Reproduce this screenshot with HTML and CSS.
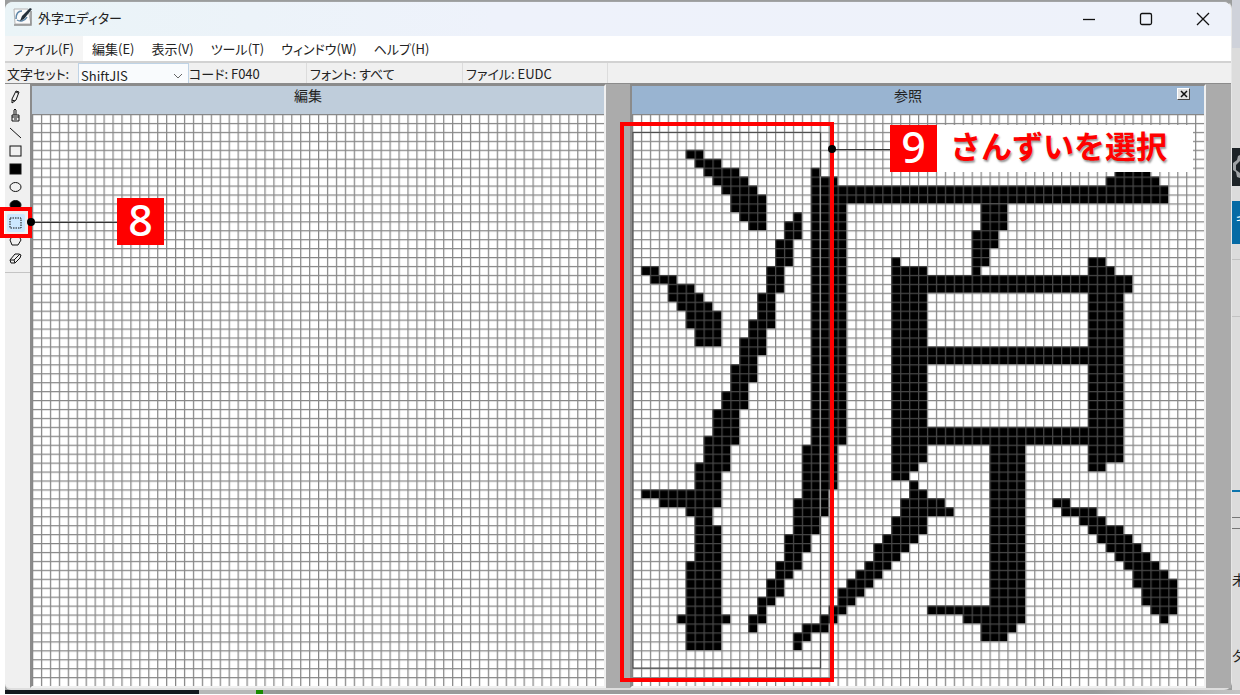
FILE: index.html
```html
<!DOCTYPE html>
<html lang="ja">
<head>
  <meta charset="UTF-8" />
  <meta name="viewport" content="width=device-width, initial-scale=1.0"/>
  <title>外字エディター</title>
  <link rel="stylesheet" href="styles.css">
</head>
<body>
  <div class="desktop">
    <div class="window">
      <header class="titlebar">
        <svg class="app-icon" viewBox="0 0 20 20">
          <path d="M1 2h14l3 15H2z" fill="#fafafa" stroke="#b5b5b5"/>
          <path d="M1 18h17V4" fill="none" stroke="#8d8d8d" stroke-width="1.5"/>
          <path d="M9 4C4 4 3 8 3 12M4 13c3 2 8 1 10-3" fill="none" stroke="#5f87a8" stroke-width="1.5"/>
          <path d="M7 14l2-5 8-8 2 1-8 10z" fill="#24303a"/>
        </svg>
        <h1>外字エディター</h1>
        <div class="window-buttons">
          <button type="button" aria-label="最小化"><svg viewBox="0 0 14 14"><path d="M1 7.500h12"/></svg></button>
          <button type="button" aria-label="最大化"><svg viewBox="0 0 14 14"><rect x="1.500" y="1.500" width="11" height="11" rx="1.500"/></svg></button>
          <button type="button" aria-label="閉じる"><svg viewBox="0 0 14 14"><path d="M1 1l12 12M13 1L1 13"/></svg></button>
        </div>
      </header>

      <nav class="menubar">
        <button type="button" class="hover">ファイル(F)</button>
        <button type="button">編集(E)</button>
        <button type="button">表示(V)</button>
        <button type="button">ツール(T)</button>
        <button type="button">ウィンドウ(W)</button>
        <button type="button">ヘルプ(H)</button>
      </nav>

      <div class="infobar">
        <label for="charset">文字セット:</label>
        <div class="select-wrap">
          <select id="charset"><option>ShiftJIS</option></select>
          <svg viewBox="0 0 10 6"><path d="M1 1l4 4 4-4"/></svg>
        </div>
        <span class="cell code">コード: F040</span>
        <span class="cell font">フォント: すべて</span>
        <span class="cell file">ファイル: EUDC</span>
      </div>

      <div class="workspace">
        <div class="toolbar">
          <button type="button" aria-label="鉛筆"><svg viewBox="0 0 16 16"><path d="M5 14v-4l4-8 3 1-3 8zM5 11l3 1M9 3l2 1"/></svg></button>
          <button type="button" aria-label="ブラシ"><svg viewBox="0 0 16 16"><path d="M7 8V3l1-1 1 1v5M5 8h7v6H5zM5 10h7M7 12h3"/></svg></button>
          <button type="button" aria-label="直線"><svg viewBox="0 0 16 16"><path d="M3 3l11 10"/></svg></button>
          <button type="button" aria-label="四角形"><svg viewBox="0 0 16 16"><rect x="3" y="3" width="11" height="10"/></svg></button>
          <button type="button" aria-label="四角形 (塗りつぶし)"><svg viewBox="0 0 16 16"><rect class="solid" x="3" y="3" width="11" height="10"/></svg></button>
          <button type="button" aria-label="だ円"><svg viewBox="0 0 16 16"><ellipse cx="8.500" cy="8" rx="5.500" ry="4.500"/></svg></button>
          <button type="button" aria-label="だ円 (塗りつぶし)"><svg viewBox="0 0 16 16"><ellipse class="solid" cx="8.500" cy="8" rx="5.500" ry="4.500"/></svg></button>
          <div class="tool-current">
            <button type="button" class="active" aria-label="四角形選択"><svg viewBox="0 0 16 16"><rect x="3" y="3" width="11" height="10" stroke-dasharray="1.500 1"/></svg></button>
            <div class="callout-frame"></div>
            <div class="callout-line"></div>
            <div class="callout-dot"></div>
            <div class="badge">8</div>
          </div>
          <button type="button" aria-label="自由選択"><svg viewBox="0 0 16 16"><path d="M5 3l-2 4 2 5h6l3-5-2-4z"/></svg></button>
          <button type="button" aria-label="消しゴム"><svg viewBox="0 0 16 16"><path d="M3 9l5-6h4l2 1-1 3-5 5H4zM3 9h4l1 3M7 9l6-6"/></svg></button>
        </div>

        <main class="panels">
          <section class="panel">
            <div class="panel-title"><h2>編集</h2></div>
            <svg class="bitmap" viewBox="0 0 64 64">
              <defs>
                <pattern id="grid" width="1" height="1" patternUnits="userSpaceOnUse">
                  <path class="grid-line" d="M0 0.070H1M0.070 0V1"/>
                </pattern>
              </defs>
              <rect width="64" height="64" fill="url(#grid)"/>
            </svg>
          </section>

          <section class="panel reference">
            <div class="panel-title">
              <h2>参照</h2>
              <button type="button" class="panel-close" aria-label="閉じる"><svg viewBox="0 0 8 8"><path d="M1 1l6 6M7 1L1 7"/></svg></button>
            </div>
            <div class="canvas">
              <svg class="bitmap" viewBox="0 0 64 64">
                <rect class="selection" x="0.100" y="2.060" width="21" height="59.940"/>
                <g class="glyph">
                  <!-- さんずい -->
                  <path d="M6 4H8V5H10V6H12V7H13V8H14V9H15V13H13V12H12V11H11V9H10V8H9V7H8V6H7V5H6Z"/>
                  <path d="M1 17H3V18H5V19H7V20H8V21H9V22H10V26H7V24H6V22H5V21H4V19H2V18H1Z"/>
                  <path d="M18 11H19V14H18V17H17V20H16V24H15V27H14V30H13V33H12V37H11V40H10V44H9V46H10V56H11V57H10V60H6V57H5V56H6V50H7V45H6V44H3V43H1V42H7V39H8V36H9V33H10V31H11V28H12V25H13V23H14V20H15V17H16V14H17V12H18Z"/>
                  <!-- 原 -->
                  <path d="M20 6H21V7H23V8H53V7H54V6H58V7H59V8H60V10H24V37H23V42H22V45H21V47H20V49H19V51H18V52H17V54H16V55H15V57H14V58H13V56H14V54H15V52H16V50H17V47H18V43H19V37H20Z"/>
                  <path d="M39 10H42V13H41V15H40V17H39V18H38V13H39Z"/>
                  <path d="M29 16H30V17H33V18H51V16H53V17H54V18H56V20H55V39H53V40H51V37H44V57H43V58H42V59H39V57H37V56H33V55H40V37H33V39H32V40H31V41H29ZM33 20V26H51V20ZM33 28V35H51V28Z"/>
                  <path d="M31 41H32V42H33V43H35V44H36V45H33V47H32V48H31V49H30V50H29V51H28V52H27V53H26V54H25V55H24V56H23V57H22V58H20V59H19V60H18V58H19V57H21V56H22V55H23V53H24V52H25V51H26V50H27V48H28V47H29V45H30V43H31Z"/>
                  <path d="M47 43H49V44H52V45H53V46H55V47H56V48H57V49H58V50H59V51H60V52H61V56H60V57H59V56H58V55H57V53H56V51H55V50H54V49H53V48H52V47H51V46H50V45H48V44H47Z"/>
                </g>
                <rect width="64" height="64" fill="url(#grid)"/>
                <path class="selection-inverse" d="M21.060 7V45"/>
              </svg>
              <div class="callout-frame"></div>
              <div class="callout-line"></div>
              <div class="callout-dot"></div>
              <div class="callout-text"><span class="badge">9</span><strong>さんずいを選択</strong></div>
            </div>
          </section>
        </main>
      </div>
    </div>

    <!-- edge of the browser behind the window -->
    <div class="behind-right">
      <div class="tab"></div>
      <div class="gear"><svg viewBox="0 0 8 38"><path d="M8 7L6 8 5 12 1 15v7l3 2 1 5 3 1" fill="#a0a3a6"/><path d="M8 13L4 17v5l4 3" fill="#1d2327"/></svg></div>
      <div class="blue">キ</div>
      <div class="rule first"></div>
      <div class="rule second"></div>
      <div class="rule accent"></div>
      <div class="rule dark"></div>
      <div class="rule dark"></div>
      <div class="text">未</div>
      <div class="text">タ</div>
    </div>
    <div class="behind-bottom"><div class="dark"></div><div class="light"></div><div class="green"></div><div class="rest"></div></div>
  </div>
</body>
</html>
```

FILE: styles.css
```css
* {
  box-sizing: border-box;
}
body {
  margin: 0;
  background-color: #fff;
  color: #222;
  font-family: "Noto Sans CJK JP", sans-serif;
  font-size: 13px;
  font-feature-settings: "palt";
}
button {
  padding: 0;
  border: none;
  background: none;
  color: inherit;
  font: inherit;
  font-feature-settings: inherit;
}
h1, h2 {
  margin: 0;
  font-weight: normal;
}
.desktop {
  display: grid;
  grid-template-columns: 1fr 8px;
  padding-left: 5px;
  background: linear-gradient(90deg, #fff 5px, #9b9d9d 5px);
}
.window {
  margin-top: 1px;
  border: 1px solid #a2a4a5;
  border-width: 1px 1px 2px 0;
  border-color: #a2a4a5 #e6e6e6 #dedede;
  border-radius: 8px 8px 8px 6px;
  background-color: #f0f0f0;
}

/* title bar */
.titlebar {
  display: flex;
  align-items: center;
  height: 34px;
  padding-left: 8px;
  border-radius: 8px 8px 0 0;
  background: linear-gradient(90deg, #eaf4f7, #eef2fb 40%, #eef2fa);
}
.titlebar h1 {
  flex: 1;
  font-size: 13px;
  line-height: 32px;
  align-self: flex-start;
}
.app-icon {
  width: 20px;
  height: 20px;
  margin: 0 5px 4px 0;
}
.window-buttons {
  display: flex;
  align-self: flex-start;
}
.window-buttons button {
  width: 57px;
  height: 31px;
}
.window-buttons svg {
  width: 14px;
  height: 14px;
  fill: none;
  stroke: #111;
  stroke-width: 1.3;
  vertical-align: middle;
}

/* menu */
.menubar {
  display: flex;
  height: 25px;
  background-color: #fff;
}
.menubar button {
  padding: 0 9px 0 8px;
  line-height: 24px;
}
.menubar .hover {
  margin-right: 1px;
  background-color: #f5f5f5;
}

/* status row */
.infobar {
  display: flex;
  height: 22px;
  border-top: 2px solid #d2d2d2;
  line-height: 22px;
  white-space: nowrap;
  overflow: hidden;
}
.infobar label {
  width: 73px;
  padding-left: 2px;
}
.select-wrap {
  position: relative;
  width: 111px;
}
.select-wrap select {
  width: 100%;
  height: 24px;
  padding: 0 2px;
  border: 1px solid #bfd3e6;
  background-color: #f9fbfd;
  color: #222;
  font: inherit;
  line-height: 24px;
  appearance: none;
}
.select-wrap svg {
  position: absolute;
  top: 10px;
  right: 6px;
  width: 10px;
  height: 6px;
  fill: none;
  stroke: #666;
}
.cell {
  border-right: 1px solid #dcdcdc;
}
.code {
  width: 118px;
}
.font,
.file {
  padding-left: 3px;
}
.font {
  width: 156px;
}
.file {
  width: 145px;
}

/* tools */
.workspace {
  display: flex;
  border-top: 1px solid #8c8c8c;
}
.toolbar {
  display: flex;
  flex-direction: column;
  align-self: flex-start;
  flex: none;
  width: 25px;
  padding: 4px 0 4px 2px;
  border-bottom: 1px solid #c4c4c4;
}
.toolbar button {
  display: block;
  width: 18px;
  height: 18px;
}
.toolbar svg {
  display: block;
  width: 16px;
  height: 16px;
  fill: none;
  stroke: #111;
}
.toolbar .solid {
  fill: #000;
}
.toolbar .active {
  border-radius: 2px;
  background-color: #cce8ff;
}
.tool-current {
  position: relative;
}

/* edit and reference panels */
.panels {
  display: flex;
  flex: 1;
  gap: 24px;
  padding-right: 25px;
  background-color: #ababab;
}
.panel {
  flex: 1;
  border: 2px solid #7f7f7f;
  border-color: #8b8b8b #f0f0f0 #f0f0f0 #8b8b8b;
  background-color: #fff;
}
.panel-title {
  position: relative;
  height: 28px;
  background-color: #bfcddb;
  text-align: center;
}
.reference .panel-title {
  background-color: #99b4d1;
}
.panel-title h2 {
  padding-right: 20px;
  font-size: 14px;
  line-height: 18px;
}
.panel-close {
  position: absolute;
  top: 2px;
  right: 14px;
  width: 13px;
  height: 12px;
  border: 1px solid #fff;
  border-right-color: #444;
  border-bottom-color: #444;
  background-color: #e3e3e3;
}
.panel-close svg {
  display: block;
  width: 8px;
  height: 8px;
  margin: 0 auto;
  stroke: #111;
  stroke-width: 1.5;
}
.canvas {
  position: relative;
}
.bitmap {
  display: block;
  width: 100%;
}
.grid-line {
  fill: none;
  stroke: rgba(95, 95, 95, 0.75);
  stroke-width: 0.14;
}
.glyph {
  fill: #000;
  fill-rule: evenodd;
}
.selection {
  fill: none;
  stroke: #222;
  stroke-width: 0.12;
}
.selection-inverse {
  stroke: #aaa;
  stroke-width: 0.12;
}

/* red callouts */
.callout-frame {
  position: absolute;
  border: 4px solid #f00;
}
.callout-line {
  position: absolute;
  height: 1px;
  background-color: #333;
}
.callout-dot {
  position: absolute;
  width: 8px;
  height: 8px;
  border-radius: 50%;
  background-color: #000;
}
.badge {
  width: 47px;
  height: 47px;
  background-color: #f00;
  color: #fff;
  font-family: "Noto Sans", "Open Sans", sans-serif;
  font-size: 43px;
  font-weight: 500;
  line-height: 43px;
  text-align: center;
}
.tool-current .callout-frame {
  top: -7px;
  left: -7px;
  width: 32px;
  height: 31px;
}
.tool-current .callout-line {
  top: 8px;
  left: 24px;
  width: 86px;
}
.tool-current .callout-dot {
  top: 4px;
  left: 20px;
}
.tool-current .badge {
  position: absolute;
  top: -16px;
  left: 110px;
}
.canvas .callout-frame {
  top: 8px;
  left: -12px;
  width: 214px;
  height: 560px;
}
.canvas .callout-line {
  top: 35px;
  left: 200px;
  width: 58px;
}
.canvas .callout-dot {
  top: 31px;
  left: 196px;
}
.callout-text {
  position: absolute;
  top: 11px;
  left: 258px;
  display: flex;
  width: 303px;
  background-color: #fff;
}
.callout-text strong {
  padding-left: 13px;
  color: #f00;
  font-size: 31px;
  font-feature-settings: normal;
  line-height: 40px;
  text-shadow: 1px 2px 2px rgba(0, 0, 0, 0.4);
  white-space: nowrap;
}

/* what shows behind the window */
.behind-right {
  display: flex;
  flex-direction: column;
  overflow: hidden;
  background-color: #dcdcdc;
}
.behind-right .tab {
  height: 48px;
  margin-bottom: 100px;
  background-color: #cfd2da;
}
.behind-right .gear {
  height: 38px;
  margin-bottom: 15px;
  background-color: #1d2327;
}
.gear svg {
  display: block;
}
.behind-right .blue {
  height: 43px;
  padding-left: 4px;
  background-color: #066ba5;
  color: #fff;
  font-size: 12px;
  line-height: 36px;
}
.rule {
  height: 1px;
  background-color: #c2c2c2;
}
.rule.first {
  margin-top: 15px;
}
.rule.second {
  margin-top: 56px;
}
.rule.accent {
  height: 2px;
  margin: 173px 0 15px;
  background-color: #0d75ad;
}
.rule.dark {
  margin: 10px 0 0;
  background-color: #777;
}
.behind-right .text {
  height: 24px;
  margin: 38px 0 0;
  font-size: 14px;
  line-height: 24px;
}
.behind-right .text + .text {
  margin-top: 52px;
}
.behind-bottom {
  display: flex;
  grid-column: 1 / -1;
  height: 4px;
}
.behind-bottom .dark {
  width: 194px;
  background-color: #15191f;
}
.behind-bottom .light {
  width: 57px;
  background-color: #b8b8b8;
}
.behind-bottom .green {
  width: 7px;
  background-color: #188a00;
}
.behind-bottom .rest {
  flex: 1;
  background: linear-gradient(90deg, #999b9b 85%, #c4c4c4);
}
```
